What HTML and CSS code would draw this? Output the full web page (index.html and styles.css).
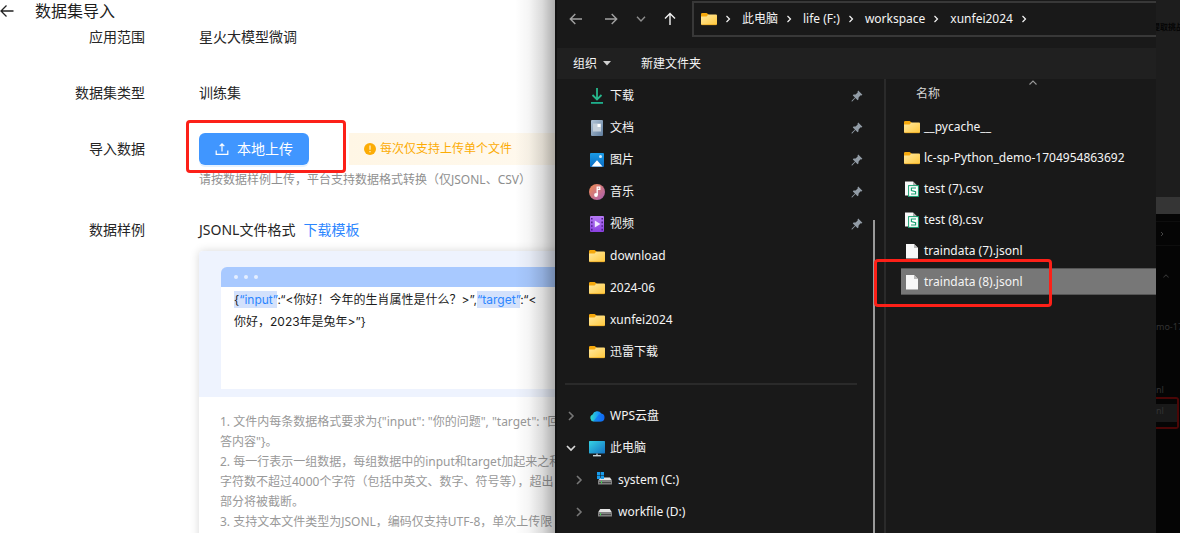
FILE: index.html
```html
<!DOCTYPE html>
<html lang="zh-CN">
<head>
<meta charset="utf-8">
<title>数据集导入</title>
<link rel="stylesheet" href="styles.css">
</head>
<body>
<svg class="defs" aria-hidden="true">
  <defs>
    <linearGradient id="g-folder" x1="0" y1="0" x2="1" y2="1"><stop offset="0" stop-color="#ffe9a0"/><stop offset="1" stop-color="#ffc83d"/></linearGradient>
    <linearGradient id="g-doc" x1="0" y1="0" x2="1" y2="1"><stop offset="0" stop-color="#b4c6d8"/><stop offset="1" stop-color="#5f7c9c"/></linearGradient>
    <linearGradient id="g-pic" x1="0" y1="0" x2="0" y2="1"><stop offset="0" stop-color="#1a9be6"/><stop offset="1" stop-color="#0a6cc4"/></linearGradient>
    <linearGradient id="g-music" x1="0" y1="0" x2="1" y2="1"><stop offset="0" stop-color="#f08c50"/><stop offset="1" stop-color="#a85cb4"/></linearGradient>
    <linearGradient id="g-video" x1="0" y1="0" x2="0" y2="1"><stop offset="0" stop-color="#b67af5"/><stop offset="1" stop-color="#8a40e0"/></linearGradient>
    <linearGradient id="g-cloud" x1="0" y1="0" x2="1" y2="0"><stop offset="0" stop-color="#32dcc0"/><stop offset=".5" stop-color="#1ea0f5"/><stop offset="1" stop-color="#0f60f0"/></linearGradient>
    <linearGradient id="g-pc" x1="0" y1="0" x2="1" y2="1"><stop offset="0" stop-color="#35d3e4"/><stop offset="1" stop-color="#1573c4"/></linearGradient>
    <symbol id="folder" viewBox="0 0 16 16"><path d="M0 3.2Q0 2 1.2 2H5.6L7.6 3.6 6 6H0Z" fill="#f5a80c"/><path d="M0 5.4H5.6L7.2 3.6H15Q16 3.6 16 4.6V13Q16 14 15 14H1Q0 14 0 13Z" fill="url(#g-folder)"/><path d="M.6 13.7H15.4" stroke="#eaa51e" stroke-width=".7"/></symbol>
    <symbol id="pin" viewBox="0 0 12 12"><path d="M7.2 .6 11.4 4.8 10.4 5.4 9.6 5.3 7.6 7.5 7.4 9.6 6.6 10.2 4.4 8 1.2 11.4.6 11.4.6 10.8 4 7.6 1.8 5.4 2.5 4.6 4.6 4.4 6.7 2.4 6.6 1.6Z" fill="#929ca6"/></symbol>
    <symbol id="chev" viewBox="0 0 8 10"><path d="M2 1 6 5 2 9" fill="none" stroke="currentColor" stroke-width="1.6"/></symbol>
    <symbol id="file" viewBox="0 0 16 16"><path d="M2 1H10L14 5V15.5H2Z" fill="#f8f8f8"/><path d="M10 1V5H14Z" fill="#b8b8b8"/></symbol>
    <symbol id="csv" viewBox="0 0 16 16"><path d="M1 .5H9L12.5 4V14.5H1Z" fill="#f8f8f8"/><path d="M9 .5V4H12.5Z" fill="#aaa"/><rect x="4.6" y="4.6" width="9.8" height="10.8" fill="#fff" stroke="#16a070" stroke-width="1"/><path d="M12 7H7.4V9.6L11.6 10.6V13H7" fill="none" stroke="#16a070" stroke-width="1.2"/></symbol>
    <symbol id="drive" viewBox="0 0 16 16"><path d="M3.2 5H12.8L15 8.5H1Z" fill="#e4e4e4"/><rect x="1" y="8.5" width="14" height="4" rx=".6" fill="#858585"/><path d="M2 10.6H14" stroke="#454545"/><path d="M3.5 9.3V11.3" stroke="#40d050"/></symbol>
  </defs>
</svg>
<div class="screen">
  <main class="page">
    <header class="page-head">
      <button class="back" type="button" aria-label="返回"><svg width="14" height="14" viewBox="0 0 14 14"><path d="M13.5 7H1.2M6.5 1.5 1 7l5.5 5.5" fill="none" stroke="#222" stroke-width="1.3"/></svg></button>
      <h1>数据集导入</h1>
    </header>
    <div class="form">
      <span class="label">应用范围</span><span class="value">星火大模型微调</span>
      <span class="label">数据集类型</span><span class="value">训练集</span>
      <span class="label">导入数据</span>
      <div class="upload">
        <div class="upload-row">
          <div class="marked"><button class="primary" type="button"><svg width="14" height="14" viewBox="0 0 14 14"><path d="M1.2 8.6V12.4H12.8V8.6M7 9.4V2M4.7 4.2 7 1.8 9.3 4.2" fill="none" stroke="#fff" stroke-width="1.2"/></svg>本地上传</button></div>
          <div class="notice"><svg width="12" height="12" viewBox="0 0 12 12"><circle cx="6" cy="6" r="6" fill="#fcac05"/><path d="M6 2.6V6.8M6 8V9.3" stroke="#fff3d8" stroke-width="1.2"/></svg>每次仅支持上传单个文件</div>
        </div>
        <p class="hint">请按数据样例上传，平台支持数据格式转换（仅JSONL、CSV）</p>
      </div>
      <span class="label">数据样例</span>
      <div class="sample">
        <div class="sample-head">JSONL文件格式<a href="#">下载模板</a></div>
        <section class="card">
          <div class="preview">
            <div class="dots"><i></i><i></i><i></i></div>
            <div class="code">
              <div><span class="key">{<b>“input”</b></span>:“&lt;你好！今年的生肖属性是什么？&gt;”,<span class="key"><b>“target”</b></span>:“&lt;</div>
              <div>你好，2023年是兔年&gt;”}</div>
            </div>
          </div>
          <div class="tips">
            <div>1. 文件内每条数据格式要求为{"input": "你的问题", "target": "回</div>
            <div>答内容"}。</div>
            <div>2. 每一行表示一组数据，每组数据中的input和target加起来之和</div>
            <div>字符数不超过4000个字符（包括中英文、数字、符号等），超出</div>
            <div>部分将被截断。</div>
            <div>3. 支持文本文件类型为JSONL，编码仅支持UTF-8，单次上传限</div>
          </div>
        </section>
      </div>
    </div>
  </main>

  <section class="dialog">
    <div class="navbar">
      <div class="nav-btns">
        <button type="button" aria-label="后退"><svg width="14" height="14" viewBox="0 0 14 14"><path d="M13 7H1.5M6.3 2 1.3 7l5 5" fill="none" stroke="#a2a2a2" stroke-width="1.4"/></svg></button>
        <button type="button" aria-label="前进"><svg width="14" height="14" viewBox="0 0 14 14"><path d="M1 7H12.5M7.7 2l5 5-5 5" fill="none" stroke="#a2a2a2" stroke-width="1.4"/></svg></button>
        <button type="button" aria-label="最近位置" class="recent"><svg width="10" height="8" viewBox="0 0 10 8"><path d="M1 1.8 5 6 9 1.8" fill="none" stroke="#8e8e8e" stroke-width="1.4"/></svg></button>
        <button type="button" aria-label="上移"><svg width="12" height="14" viewBox="0 0 12 14"><path d="M6 13V1.6M1 6.6l5-5 5 5" fill="none" stroke="#f2f2f2" stroke-width="1.4"/></svg></button>
      </div>
      <nav class="address">
        <svg width="16" height="16"><use href="#folder"/></svg>
        <svg class="sep" width="6" height="8"><use href="#chev"/></svg><a href="#">此电脑</a>
        <svg class="sep" width="6" height="8"><use href="#chev"/></svg><a href="#">life (F:)</a>
        <svg class="sep" width="6" height="8"><use href="#chev"/></svg><a href="#">workspace</a>
        <svg class="sep" width="6" height="8"><use href="#chev"/></svg><a href="#">xunfei2024</a>
        <svg class="sep" width="6" height="8"><use href="#chev"/></svg>
      </nav>
    </div>
    <div class="toolbar">
      <button type="button">组织<svg width="8" height="5" viewBox="0 0 8 5"><path d="M0 0H8L4 4.6Z" fill="#d0d0d0"/></svg></button>
      <button type="button">新建文件夹</button>
    </div>
    <div class="panes">
      <aside class="side">
        <nav class="tree">
          <a href="#" class="node"><span class="arrow"></span><svg width="16" height="18" viewBox="0 0 16 18"><path d="M8 1V12M3.5 8 8 12.4 12.5 8" fill="none" stroke="#27b78c" stroke-width="1.8"/><rect x="2" y="15" width="12" height="1.8" fill="#1fae8c"/></svg>下载<svg class="pin" width="12" height="12"><use href="#pin"/></svg></a>
          <a href="#" class="node"><span class="arrow"></span><svg width="16" height="18" viewBox="0 0 16 18"><rect x="2" y="1" width="12" height="16" rx="1" fill="url(#g-doc)"/><rect x="4" y="4.5" width="8" height="8" fill="#c3ced9"/><rect x="8.5" y="5" width="3" height="3" fill="#fff"/></svg>文档<svg class="pin" width="12" height="12"><use href="#pin"/></svg></a>
          <a href="#" class="node"><span class="arrow"></span><svg width="16" height="18" viewBox="0 0 16 18"><rect x="1" y="2" width="14" height="14" rx="1" fill="url(#g-pic)"/><path d="M2.5 15.5 8 9.2l5.5 6.3Z" fill="#fff"/><circle cx="11.5" cy="5.5" r="1.5" fill="#d5edff"/></svg>图片<svg class="pin" width="12" height="12"><use href="#pin"/></svg></a>
          <a href="#" class="node"><span class="arrow"></span><svg width="16" height="18" viewBox="0 0 16 18"><circle cx="8" cy="9" r="8" fill="url(#g-music)"/><circle cx="7" cy="12" r="1.9" fill="#fff"/><path d="M8.2 12V4.2H10.8V6.4H8.5" fill="none" stroke="#fff" stroke-width="1.3"/></svg>音乐<svg class="pin" width="12" height="12"><use href="#pin"/></svg></a>
          <a href="#" class="node"><span class="arrow"></span><svg width="16" height="18" viewBox="0 0 16 18"><rect x="1" y="1" width="14" height="16" rx="1" fill="url(#g-video)"/><path d="M2.8 3V16M13.2 3V16" stroke="#4b1f86" stroke-width="1.5" stroke-dasharray="1.6 2"/><path d="M5.8 5.6V12.6L11.4 9.1Z" fill="#f0e6ff"/></svg>视频<svg class="pin" width="12" height="12"><use href="#pin"/></svg></a>
          <a href="#" class="node"><span class="arrow"></span><svg width="16" height="16"><use href="#folder"/></svg>download</a>
          <a href="#" class="node"><span class="arrow"></span><svg width="16" height="16"><use href="#folder"/></svg>2024-06</a>
          <a href="#" class="node"><span class="arrow"></span><svg width="16" height="16"><use href="#folder"/></svg>xunfei2024</a>
          <a href="#" class="node"><span class="arrow"></span><svg width="16" height="16"><use href="#folder"/></svg>迅雷下载</a>
          <hr>
          <a href="#" class="node"><span class="arrow"><svg width="8" height="10"><use href="#chev"/></svg></span><svg width="16" height="16" viewBox="0 0 16 16"><path d="M4.5 13.5A3.6 3.6 0 0 1 3.6 6.6 4.8 4.8 0 0 1 12.3 5.6 4 4 0 0 1 12 13.5Z" fill="url(#g-cloud)"/><path d="M4 13.5 10 6.5Q14.5 5.5 15 9.6 14.8 13.2 11.5 13.5Z" fill="#0f6bf2" opacity=".6"/></svg>WPS云盘</a>
          <a href="#" class="node"><span class="arrow open"><svg width="10" height="8" viewBox="0 0 10 8"><path d="M1 2 5 6 9 2" fill="none" stroke="#d8d8d8" stroke-width="1.7"/></svg></span><svg width="16" height="18" viewBox="0 0 16 18"><rect x="0" y="2" width="16" height="12.4" rx=".6" fill="url(#g-pc)"/><path d="M7 14.4H9V16H7Z" fill="#8a98a4"/><rect x="4" y="16" width="8" height="1.4" fill="#c9d2d8"/></svg>此电脑</a>
          <a href="#" class="node child"><span class="arrow"><svg width="8" height="10"><use href="#chev"/></svg></span><svg width="16" height="18" viewBox="0 0 16 18"><path d="M4 6.5H13L15 9.5H1Z" fill="#e4e4e4"/><rect x="1" y="9.5" width="14" height="4" rx=".6" fill="#858585"/><path d="M2 11.6H14" stroke="#454545"/><path d="M4.5 10V12.4" stroke="#40d050"/><path d="M0 1H3.2V4.2H0ZM3.8 1H7V4.2H3.8ZM0 4.8H3.2V8H0ZM3.8 4.8H7V8H3.8Z" fill="#189bea"/></svg>system (C:)</a>
          <a href="#" class="node child"><span class="arrow"><svg width="8" height="10"><use href="#chev"/></svg></span><svg width="16" height="16"><use href="#drive"/></svg>workfile (D:)</a>
        </nav>
        <div class="scroll"></div>
      </aside>
      <div class="files">
        <div class="files-head"><span>名称</span><svg width="8" height="5" viewBox="0 0 8 5"><path d="M.5 4.5 4 1 7.5 4.5" fill="none" stroke="#999" stroke-width="1.1"/></svg></div>
        <ul>
          <li><svg width="16" height="16"><use href="#folder"/></svg>__pycache__</li>
          <li><svg width="16" height="16"><use href="#folder"/></svg>lc-sp-Python_demo-1704954863692</li>
          <li><svg width="16" height="16"><use href="#csv"/></svg>test (7).csv</li>
          <li><svg width="16" height="16"><use href="#csv"/></svg>test (8).csv</li>
          <li><svg width="16" height="16"><use href="#file"/></svg>traindata (7).jsonl</li>
          <li class="selected"><svg width="16" height="16"><use href="#file"/></svg>traindata (8).jsonl</li>
        </ul>
      </div>
    </div>
  </section>

  <aside class="behind">
    <div class="behind-top">提取挑战</div>
    <div class="behind-bar"></div>
    <div class="behind-path"><svg width="4" height="6"><use href="#chev"/></svg></div>
    <div class="behind-sort"><svg width="6" height="4" viewBox="0 0 8 5"><path d="M.5 4.5 4 1 7.5 4.5" fill="none" stroke="#333" stroke-width="1.4"/></svg></div>
    <div class="behind-name">mo-17</div>
    <div class="behind-ext">nl</div>
    <div class="behind-mark"><span>nl</span></div>
  </aside>
</div>
</body>
</html>
```

FILE: styles.css
```css
*, *::before, *::after { box-sizing: border-box; }
body {
  margin: 0;
  font-family: "Noto Sans", "Noto Sans CJK SC", sans-serif;
  font-size: 12px;
  line-height: 20px;
  color: #262626;
  background: #fff;
}
h1, p, ul { margin: 0; padding: 0; font-weight: 400; }
a { color: inherit; text-decoration: none; }
button { font: inherit; color: inherit; background: none; border: 0; padding: 0; display: flex; align-items: center; }
svg { flex: none; display: block; }
.defs { position: absolute; width: 0; height: 0; }
.screen {
  display: grid;
  grid-template-columns: minmax(0, 555fr) minmax(0, 601fr) 24px;
  height: 100vh;
  overflow: hidden;
}

/* import form */
.page { overflow: hidden; white-space: nowrap; }
.page-head { display: flex; align-items: center; gap: 21px; height: 21px; }
.page-head h1 { font-size: 16px; line-height: 20px; color: #1c1c1c; }
.form {
  display: grid;
  grid-template-columns: 145px minmax(0, 1fr);
  column-gap: 54px;
  row-gap: 24px;
  font-size: 14px;
  line-height: 32px;
}
.label { text-align: right; }
.upload-row { display: flex; gap: 40px; }
.marked { position: relative; }
.marked::after {
  content: "";
  position: absolute;
  top: -13px; left: -13px;
  width: 160px; height: 53px;
  border: 3px solid #fc2018;
  border-radius: 4px;
  pointer-events: none;
}
.primary {
  width: 110px;
  height: 32px;
  justify-content: center;
  gap: 8px;
  color: #fff;
  background: #4096ff;
  border-radius: 6px;
  box-shadow: 0 2px 0 #e5f2ff;
}
.notice {
  flex: 1;
  display: flex;
  align-items: center;
  gap: 4px;
  padding-left: 15px;
  font-size: 12px;
  color: #fcac05;
  background: linear-gradient(90deg, #fff6e5, #fff9ee);
}
.hint { margin-top: 5px; font-size: 12px; line-height: 20px; color: #8f8f8f; }
.sample-head { display: flex; gap: 8px; }
.sample-head a { color: #2c86ff; }
.card {
  width: 388px;
  margin-top: 5px;
  font-size: 12px;
  border-radius: 4px;
  box-shadow: 0 0 10px rgba(0, 0, 0, .16);
  background: #fff;
}
.preview { padding: 16px 22px 8px; background: #eef3fe; border-radius: 4px 4px 0 0; }
.dots { display: flex; align-items: center; gap: 6px; height: 20px; padding-left: 13px; background: #a8c9ff; border-radius: 6px 6px 0 0; }
.dots i { width: 4px; height: 4px; border-radius: 50%; background: #e4eeff; }
.code {
  height: 102px;
  padding: 2px 13px;
  font-family: Inter, "Noto Sans CJK SC", sans-serif;
  line-height: 22px;
  color: #1c1c1c;
  background: #fff;
}
.key { padding: 1px 0; background: #d3e1fc; }
.key b { font-weight: 400; color: #2c86ff; }
.tips { padding: 15px 21px; line-height: 20px; color: #999; }

/* file picker */
.dialog {
  position: relative;
  display: flex;
  flex-direction: column;
  min-height: 0;
  color: #f4f4f4;
  background: #191919;
  border-left: 2px solid #111;
  white-space: nowrap;
}
.dialog::before {
  content: "";
  position: absolute;
  top: 0; bottom: 0; left: -42px;
  width: 40px;
  background: linear-gradient(90deg, rgba(0, 0, 0, 0), rgba(0, 0, 0, .04) 35%, rgba(0, 0, 0, .14) 68%, rgba(0, 0, 0, .32));
  pointer-events: none;
}
.navbar { display: flex; height: 48px; padding: 1px 0 11px; }
.nav-btns { display: flex; align-items: center; gap: 21px; width: 135px; padding-left: 12px; }
.recent { margin: 0 -3px; }
.address {
  flex: 1;
  display: flex;
  align-items: center;
  gap: 11px;
  padding-left: 7px;
  border: 2px solid #383838;
  border-right: 0;
  overflow: hidden;
}
.address .sep { margin-left: -3px; }
.toolbar { display: flex; align-items: center; gap: 30px; height: 31px; padding-left: 16px; background: #202020; }
.toolbar button { gap: 6px; }
.panes { flex: 1; display: flex; min-height: 0; }
.side { display: flex; width: 329px; border-right: 2px solid #2a2a2a; }
.tree { flex: 1; padding: 1px 0 0 8px; overflow: hidden; }
.node { display: flex; align-items: center; gap: 5px; height: 32px; }
.arrow { display: flex; justify-content: center; width: 12px; margin-right: 7px; color: #777; }
.node.child { padding-left: 8px; }
.pin { margin-left: auto; margin-right: 10px; }
hr { height: 2px; margin: 15px 16px 15px 0; border: 0; background: #2a2a2a; }
.scroll { width: 2px; margin: 141px 9px 0 0; background: #999; }
.files { flex: 1; min-width: 0; }
.files-head { display: grid; grid-template-columns: 30px 91px; padding: 5px 0 0 30px; height: 34px; color: #d5d5d5; }
.files-head svg { justify-self: end; margin-top: -4px; }
.files ul { display: grid; gap: 4px; padding-left: 15px; list-style: none; }
.files li { position: relative; display: flex; align-items: center; gap: 4px; height: 27px; padding-left: 3px; }
.files .selected { background: #777; border: solid #555; border-width: 1px 0; }
.selected::after {
  content: "";
  position: absolute;
  top: -10px; left: -27px;
  width: 178px; height: 48px;
  border: 3px solid #fc2018;
  border-radius: 4px;
}

/* dimmed window behind */
.behind { overflow: hidden; white-space: nowrap; color: #333; background: #050505; font-size: 9px; line-height: 14px; }
.behind-top { display: flex; justify-content: center; height: 197px; padding-top: 20px; font-size: 8px; font-weight: 700; color: #050505; background: #1d1d1d; }
.behind-bar { height: 17px; background: #353535; }
.behind-path { display: flex; align-items: center; height: 25px; margin-top: 7px; padding-left: 4px; border: solid #0e0e0e; border-width: 1px 0; color: #555; }
.behind-sort { display: flex; justify-content: center; height: 74px; padding: 28px 4px 0 0; }
.behind-name { height: 63px; }
.behind-ext { height: 14px; }
.behind-mark { height: 32px; margin-right: 1px; padding: 5px 0; border: 2px solid #4a0606; border-left: 0; border-radius: 0 3px 3px 0; }
.behind-mark span { display: block; height: 18px; background: #191919; }
```
